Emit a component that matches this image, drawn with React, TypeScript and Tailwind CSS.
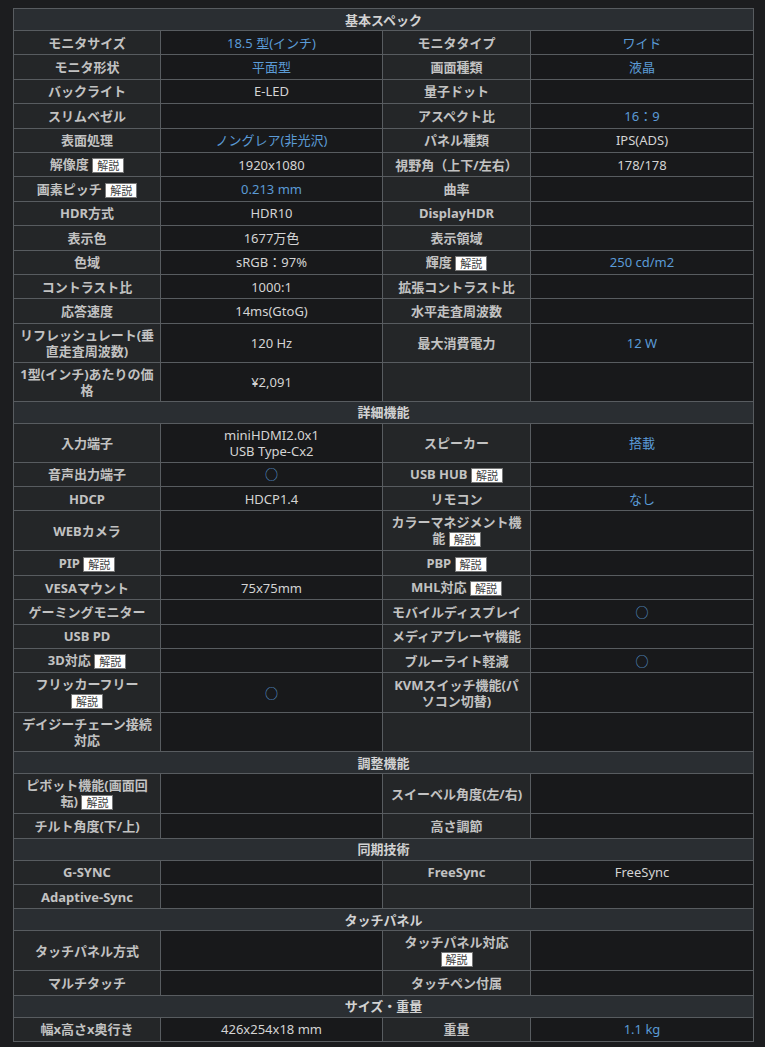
import React from 'react';

type Cell = {
  text?: string;
  blue?: boolean;
  badge?: boolean;
};

type Row = [Cell, Cell, Cell, Cell];

type Section = {
  title: string;
  rows: Row[];
};

const L = (text: string, badge = false): Cell => ({ text, badge });
const V = (text = '', blue = false): Cell => ({ text, blue });

// スペック表のデータ
const sections: Section[] = [
  {
    title: '基本スペック',
    rows: [
      [L('モニタサイズ'), V('18.5 型(インチ)', true), L('モニタタイプ'), V('ワイド', true)],
      [L('モニタ形状'), V('平面型', true), L('画面種類'), V('液晶', true)],
      [L('バックライト'), V('E-LED'), L('量子ドット'), V()],
      [L('スリムベゼル'), V(), L('アスペクト比'), V('16：9', true)],
      [L('表面処理'), V('ノングレア(非光沢)', true), L('パネル種類'), V('IPS(ADS)')],
      [L('解像度', true), V('1920x1080'), L('視野角（上下/左右）'), V('178/178')],
      [L('画素ピッチ', true), V('0.213 mm', true), L('曲率'), V()],
      [L('HDR方式'), V('HDR10'), L('DisplayHDR'), V()],
      [L('表示色'), V('1677万色'), L('表示領域'), V()],
      [L('色域'), V('sRGB：97%'), L('輝度', true), V('250 cd/m2', true)],
      [L('コントラスト比'), V('1000:1'), L('拡張コントラスト比'), V()],
      [L('応答速度'), V('14ms(GtoG)'), L('水平走査周波数'), V()],
      [L('リフレッシュレート(垂\n直走査周波数)'), V('120 Hz'), L('最大消費電力'), V('12 W', true)],
      [L('1型(インチ)あたりの価\n格'), V('¥2,091'), L(''), V()],
    ],
  },
  {
    title: '詳細機能',
    rows: [
      [L('入力端子'), V('miniHDMI2.0x1\nUSB Type-Cx2'), L('スピーカー'), V('搭載', true)],
      [L('音声出力端子'), V('○', true), L('USB HUB', true), V()],
      [L('HDCP'), V('HDCP1.4'), L('リモコン'), V('なし', true)],
      [L('WEBカメラ'), V(), L('カラーマネジメント機\n能', true), V()],
      [L('PIP', true), V(), L('PBP', true), V()],
      [L('VESAマウント'), V('75x75mm'), L('MHL対応', true), V()],
      [L('ゲーミングモニター'), V(), L('モバイルディスプレイ'), V('○', true)],
      [L('USB PD'), V(), L('メディアプレーヤ機能'), V()],
      [L('3D対応', true), V(), L('ブルーライト軽減'), V('○', true)],
      [L('フリッカーフリー\n', true), V('○', true), L('KVMスイッチ機能(パ\nソコン切替)'), V()],
      [L('デイジーチェーン接続\n対応'), V(), L(''), V()],
    ],
  },
  {
    title: '調整機能',
    rows: [
      [L('ピボット機能(画面回\n転)', true), V(), L('スイーベル角度(左/右)'), V()],
      [L('チルト角度(下/上)'), V(), L('高さ調節'), V()],
    ],
  },
  {
    title: '同期技術',
    rows: [
      [L('G-SYNC'), V(), L('FreeSync'), V('FreeSync')],
      [L('Adaptive-Sync'), V(), L(''), V()],
    ],
  },
  {
    title: 'タッチパネル',
    rows: [
      [L('タッチパネル方式'), V(), L('タッチパネル対応\n', true), V()],
      [L('マルチタッチ'), V(), L('タッチペン付属'), V()],
    ],
  },
  {
    title: 'サイズ・重量',
    rows: [[L('幅x高さx奥行き'), V('426x254x18 mm'), L('重量'), V('1.1 kg', true)]],
  },
];

/**
 * 「解説」バッジ
 */
const Badge: React.FC = () => (
  <span className="inline-block align-middle bg-white border border-[#777] text-[#444] text-[11px] leading-[11px] font-normal px-[4px] py-[1px]">
    解説
  </span>
);

const LabelCell: React.FC<{ cell: Cell }> = ({ cell }) => {
  const text = cell.text ?? '';
  const breakBefore = text.endsWith('\n');
  const body = breakBefore ? text.slice(0, -1) : text;
  return (
    <td className="h-[24.4px] border border-[#585c60] bg-[#242628] px-[3px] py-[3px] text-center font-bold text-[#c2c2c2] whitespace-pre-line">
      {body}
      {cell.badge && (breakBefore ? <br /> : ' ')}
      {cell.badge && <Badge />}
    </td>
  );
};

const ValueCell: React.FC<{ cell: Cell }> = ({ cell }) => (
  <td
    className={
      cell.blue
        ? 'h-[24.4px] border border-[#585c60] bg-[#18191b] px-[3px] py-[3px] text-center text-[#5b9bd6] whitespace-pre-line'
        : 'h-[24.4px] border border-[#585c60] bg-[#18191b] px-[3px] py-[3px] text-center text-[#d4d4d4] whitespace-pre-line'
    }
  >
    {cell.text}
  </td>
);

export default function App() {
  return (
    <div
      className="min-h-screen bg-[#1c1d1f] pt-[8px] pl-[13px] text-[13px] leading-[16px]"
      style={{ fontFamily: '"Noto Sans", "Noto Sans CJK JP", sans-serif' }}
    >
      <table className="w-[740px] table-fixed border-collapse">
        <colgroup>
          <col className="w-[147px]" />
          <col className="w-[222px]" />
          <col className="w-[148px]" />
          <col className="w-[223px]" />
        </colgroup>
        <tbody>
          {sections.map((section) => (
            <React.Fragment key={section.title}>
              {/* セクション見出し */}
              <tr>
                <th
                  colSpan={4}
                  className="h-[22px] border border-[#585c60] bg-[#2a2e32] py-0 text-center font-bold leading-[14px] text-[#d2d2d2]"
                >
                  {section.title}
                </th>
              </tr>
              {section.rows.map((row, i) => (
                <tr key={i}>
                  <LabelCell cell={row[0]} />
                  <ValueCell cell={row[1]} />
                  <LabelCell cell={row[2]} />
                  <ValueCell cell={row[3]} />
                </tr>
              ))}
            </React.Fragment>
          ))}
        </tbody>
      </table>
    </div>
  );
}
